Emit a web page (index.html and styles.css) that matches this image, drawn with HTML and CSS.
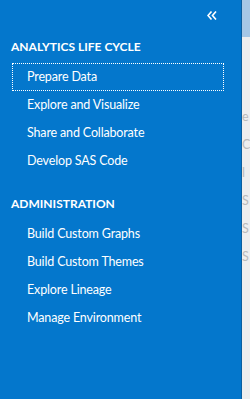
FILE: index.html
```html
<!DOCTYPE html>
<html lang="en">
<head>
  <meta charset="UTF-8" />
  <title>Navigation</title>
  <link rel="stylesheet" href="styles.css">
</head>
<body>
  <div class="layout">
    <nav class="side-nav">
      <div class="collapse-row">
        <button class="collapse-btn" aria-label="Collapse">
          <svg width="10" height="9" viewBox="0 0 10 9">
            <polyline points="4.5,0.5 1,4.5 4.5,8.5" fill="none" stroke="#fff" stroke-width="1.6" />
            <polyline points="9,0.5 5.5,4.5 9,8.5" fill="none" stroke="#fff" stroke-width="1.6" />
          </svg>
        </button>
      </div>

      <div class="nav-section">
        <h2>ANALYTICS LIFE CYCLE</h2>
        <ul>
          <li class="focused">Prepare Data</li>
          <li>Explore and Visualize</li>
          <li>Share and Collaborate</li>
          <li>Develop SAS Code</li>
        </ul>
      </div>

      <div class="nav-section">
        <h2>ADMINISTRATION</h2>
        <ul>
          <li>Build Custom Graphs</li>
          <li>Build Custom Themes</li>
          <li>Explore Lineage</li>
          <li>Manage Environment</li>
        </ul>
      </div>
    </nav>

    <main class="content">
      <div class="content-header"></div>
      <ul class="content-list">
        <li>e</li>
        <li>C</li>
        <li>l</li>
        <li>S</li>
        <li>S</li>
        <li>S</li>
      </ul>
    </main>
  </div>
</body>
</html>
```

FILE: styles.css
```css
body {
  margin: 0;
  font-family: Lato, "Open Sans", sans-serif;
  background: #eeeeee;
}
.layout {
  display: flex;
  height: 399px;
  overflow: hidden;
}
.side-nav {
  width: 241px;
  flex-shrink: 0;
  background: #0477cc;
  color: #fff;
  border-right: 1px solid #0a5fa0;
}
.collapse-row {
  display: flex;
  justify-content: flex-end;
  height: 37px;
  padding-right: 24px;
}
.collapse-btn {
  background: none;
  border: none;
  padding: 0;
  margin-top: 8px;
  height: 10px;
  cursor: pointer;
}
.nav-section h2 {
  margin: 0;
  padding-left: 11px;
  font-size: 12px;
  font-weight: 700;
  line-height: 20px;
  height: 26px;
}
.nav-section ul {
  list-style: none;
  margin: 0 0 19px 0;
  padding: 0;
}
.nav-section li {
  margin-left: 12px;
  width: 212px;
  height: 28px;
  box-sizing: border-box;
  padding-left: 14px;
  line-height: 26px;
  font-size: 12.5px;
  letter-spacing: -0.15px;
  border: 1px solid transparent;
}
.nav-section li.focused {
  border: 1px dotted #fff;
}
.content {
  flex: 1;
  overflow: hidden;
}
.content-header {
  height: 37px;
  background: #a5c7e6;
}
.content-list {
  list-style: none;
  margin: 0;
  padding: 72px 0 0 0;
  color: #bbbbbb;
  font-size: 12.5px;
}
.content-list li {
  height: 28px;
}
```
